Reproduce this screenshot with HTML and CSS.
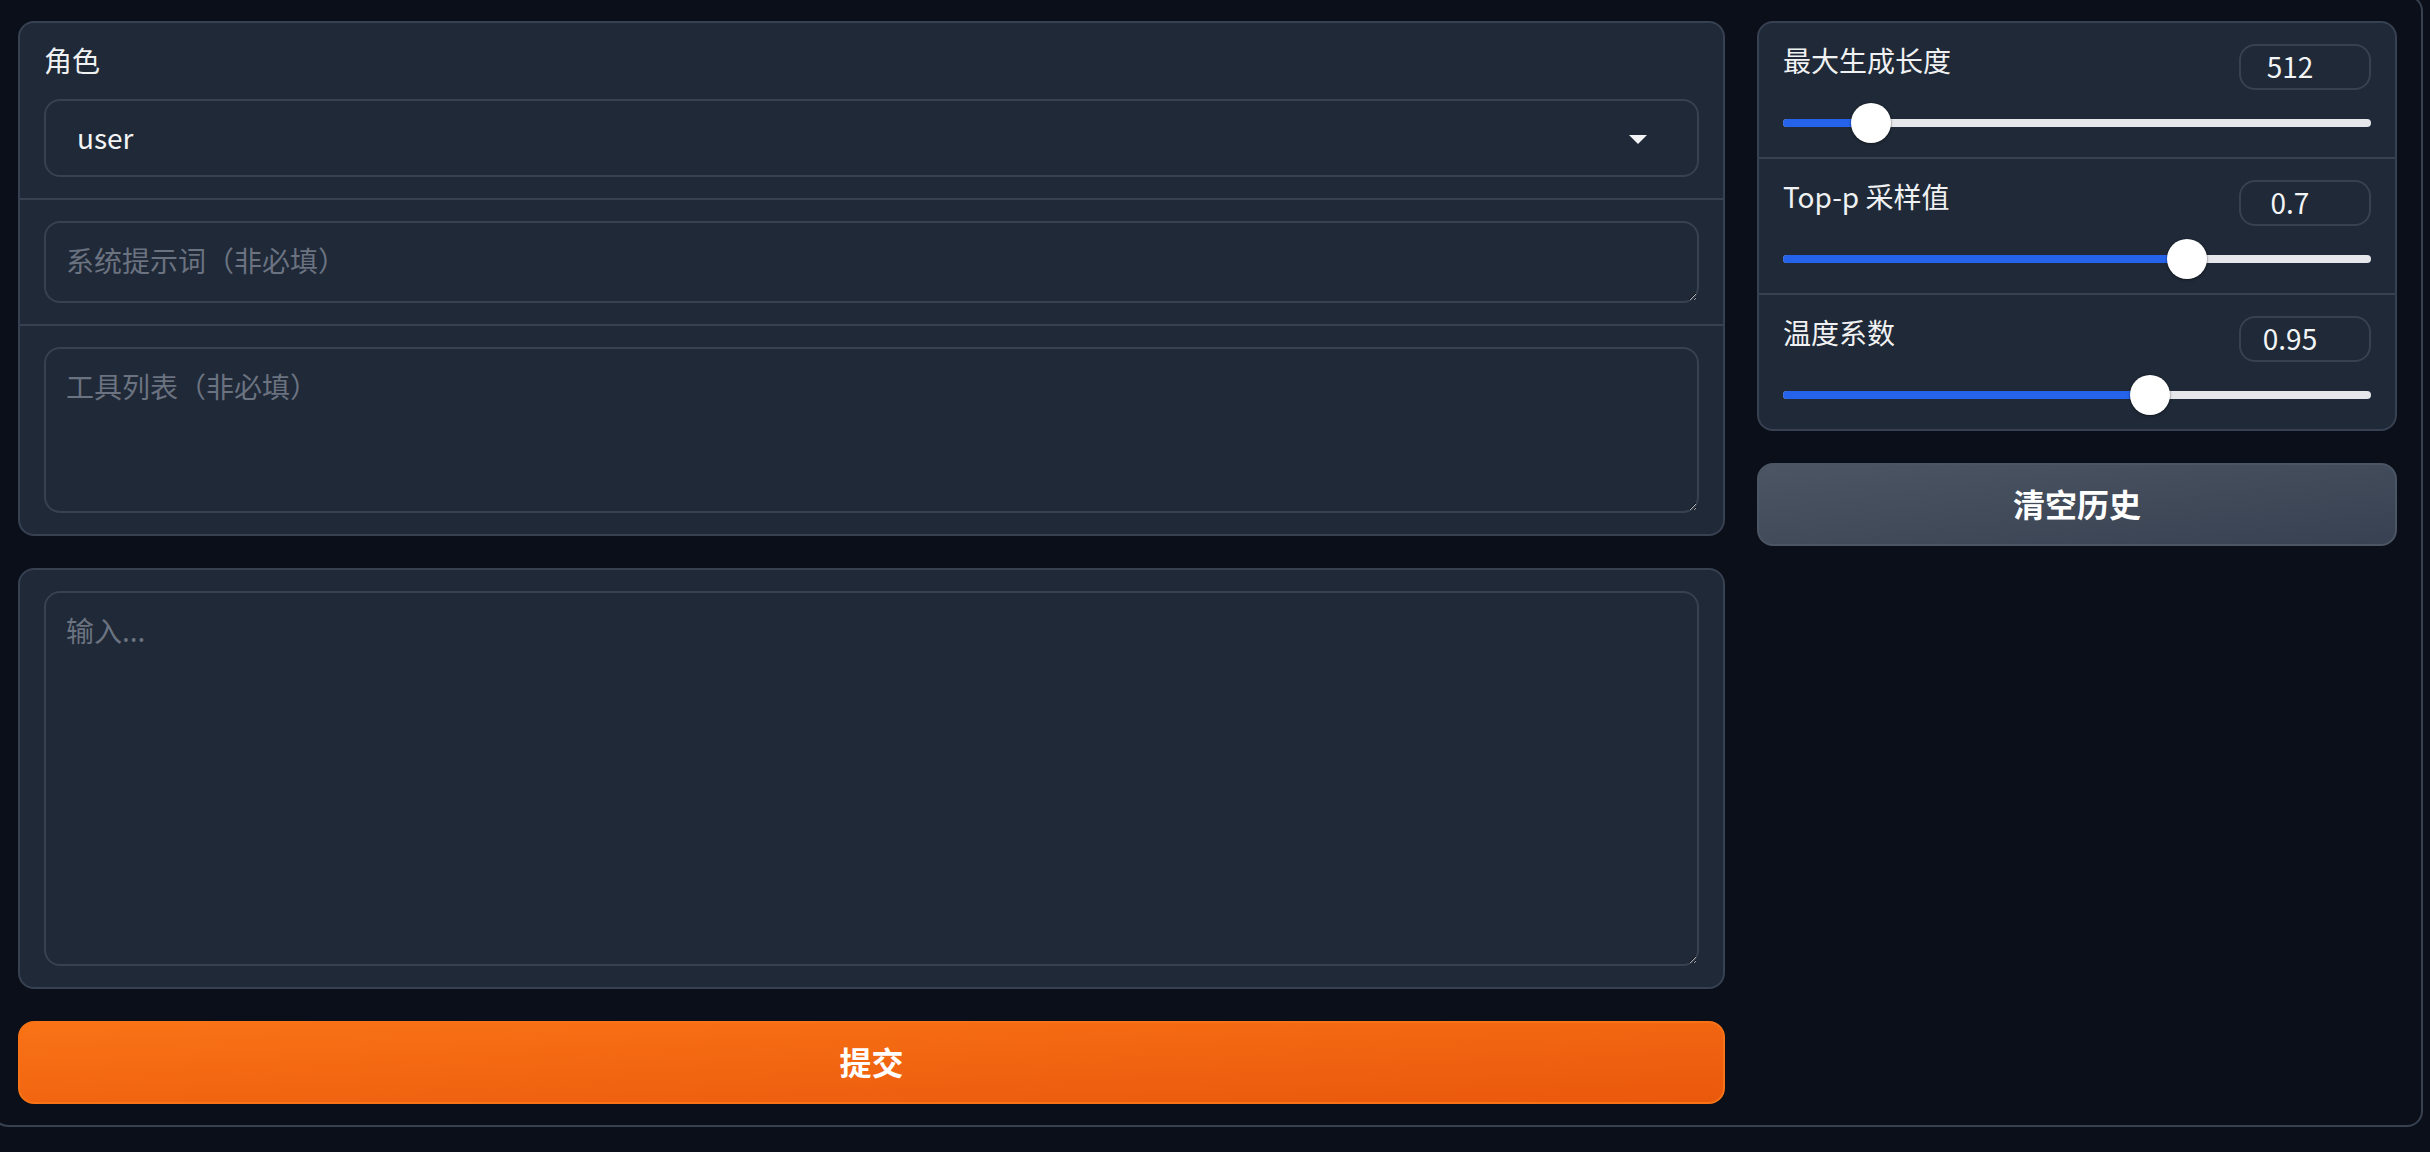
FILE: index.html
```html
<!DOCTYPE html>
<html lang="zh">
<head>
  <meta charset="UTF-8" />
  <title>Chat Demo</title>
  <link rel="stylesheet" href="styles.css">
</head>
<body>
  <div class="app">
    <div class="row">

      <div class="col">
        <div class="group">
          <div class="block">
            <label class="block-label">角色</label>
            <div class="dropdown">
              <input type="text" value="user" readonly />
              <svg class="caret" width="18" height="9" viewBox="0 0 18 9">
                <path d="M0 0 H18 L9 9 Z" fill="#f3f4f6" />
              </svg>
            </div>
          </div>
          <div class="block">
            <textarea class="ta ta-sys" placeholder="系统提示词（非必填）"></textarea>
          </div>
          <div class="block">
            <textarea class="ta ta-tools" placeholder="工具列表（非必填）"></textarea>
          </div>
        </div>

        <div class="group">
          <div class="block">
            <textarea class="ta ta-input" placeholder="输入..."></textarea>
          </div>
        </div>

        <button class="btn btn-primary">提交</button>
      </div>

      <div class="col">
        <div class="group">
          <div class="block">
            <div class="slider-head">
              <span class="block-label">最大生成长度</span>
              <input class="num" type="number" value="512" />
            </div>
            <div class="slider" style="--p: 0.125">
              <div class="track"><div class="fill"></div></div>
              <div class="thumb"></div>
            </div>
          </div>
          <div class="block">
            <div class="slider-head">
              <span class="block-label">Top-p 采样值</span>
              <input class="num" type="number" value="0.7" />
            </div>
            <div class="slider" style="--p: 0.7">
              <div class="track"><div class="fill"></div></div>
              <div class="thumb"></div>
            </div>
          </div>
          <div class="block">
            <div class="slider-head">
              <span class="block-label">温度系数</span>
              <input class="num" type="number" value="0.95" />
            </div>
            <div class="slider" style="--p: 0.6333">
              <div class="track"><div class="fill"></div></div>
              <div class="thumb"></div>
            </div>
          </div>
        </div>

        <button class="btn btn-secondary">清空历史</button>
      </div>

    </div>
  </div>
</body>
</html>
```

FILE: styles.css
```css
* {
  box-sizing: border-box;
}

body {
  margin: 0;
  background-color: #0b0f19;
  color: #f3f4f6;
  font-family: 'Noto Sans CJK SC', 'Noto Sans', sans-serif;
  font-size: 28px;
  overflow: hidden;
}

.app {
  width: 2431px;
  margin: -5px 0 0 -8px;
  padding: 24px 24px 21px;
  border: 2px solid #374151;
  border-radius: 16px;
}

.row {
  display: grid;
  grid-template-columns: 8fr 3fr;
  gap: 32px;
  align-items: start;
}

.col {
  display: flex;
  flex-direction: column;
  gap: 32px;
}

.group {
  background-color: #1f2937;
  border: 2px solid #374151;
  border-radius: 16px;
  overflow: hidden;
}

.block {
  padding: 21px 24px;
}

.block + .block {
  border-top: 2px solid #374151;
}

.block-label {
  display: block;
  color: #f0f1f3;
  font-size: 28px;
  line-height: 32px;
  margin-bottom: 23px;
}

/* dropdown */
.dropdown {
  display: flex;
  align-items: center;
  height: 78px;
  padding: 0 50px 3px 31px;
  border: 2px solid #374151;
  border-radius: 16px;
  background-color: #1f2937;
}

.dropdown input {
  flex: 1;
  border: none;
  outline: none;
  background: transparent;
  color: #f3f4f6;
  font-family: inherit;
  font-size: 28px;
  padding: 0;
}

.caret {
  display: block;
  margin-top: 5px;
}

/* textareas */
.ta {
  display: block;
  width: 100%;
  padding: 16px 20px 20px;
  border: 2px solid #374151;
  border-radius: 16px;
  background-color: #1f2937;
  color: #f3f4f6;
  font-family: inherit;
  font-size: 28px;
  line-height: 42px;
  resize: vertical;
  outline: none;
}

.ta::placeholder {
  color: #6b7280;
}

.ta-sys { height: 82px; }
.ta-tools { height: 166px; }
.ta-input { height: 375px; }

/* sliders */
.slider-head {
  display: flex;
  justify-content: space-between;
  align-items: flex-start;
  height: 46px;
}

.slider-head .block-label {
  margin: 0;
}

.num {
  width: 132px;
  height: 46px;
  padding: 0 36px 2px 6px;
  border: 2px solid #374151;
  border-radius: 16px;
  background-color: #1f2937;
  color: #f3f4f6;
  font-family: inherit;
  font-size: 28px;
  text-align: center;
  outline: none;
  -moz-appearance: textfield;
}

.num::-webkit-inner-spin-button,
.num::-webkit-outer-spin-button {
  -webkit-appearance: none;
  margin: 0;
}

.slider {
  position: relative;
  height: 46px;
}

.track {
  position: absolute;
  left: 0;
  right: 0;
  top: 29px;
  height: 8px;
  border-radius: 4px;
  background-color: #e5e7eb;
}

.fill {
  height: 100%;
  width: calc(20px + (100% - 40px) * var(--p));
  border-radius: 4px;
  background-color: #2563eb;
}

.thumb {
  position: absolute;
  top: 13px;
  left: calc((100% - 40px) * var(--p));
  width: 40px;
  height: 40px;
  border-radius: 50%;
  background-color: #ffffff;
  box-shadow: 0 0 0 1px rgba(0, 0, 0, 0.08), 0 1px 3px rgba(0, 0, 0, 0.35);
}

/* buttons */
.btn {
  display: flex;
  align-items: center;
  justify-content: center;
  width: 100%;
  height: 83px;
  padding: 0 0 4px;
  border-radius: 16px;
  font-family: inherit;
  font-size: 32px;
  font-weight: 700;
  color: #ffffff;
  cursor: pointer;
}

.btn-primary {
  border: 2px solid #f97316;
  background: linear-gradient(to bottom right, #f97316, #ea580c);
}

.btn-secondary {
  border: 2px solid #4b5563;
  background: linear-gradient(to bottom right, #4b5563, #374151);
}
```
